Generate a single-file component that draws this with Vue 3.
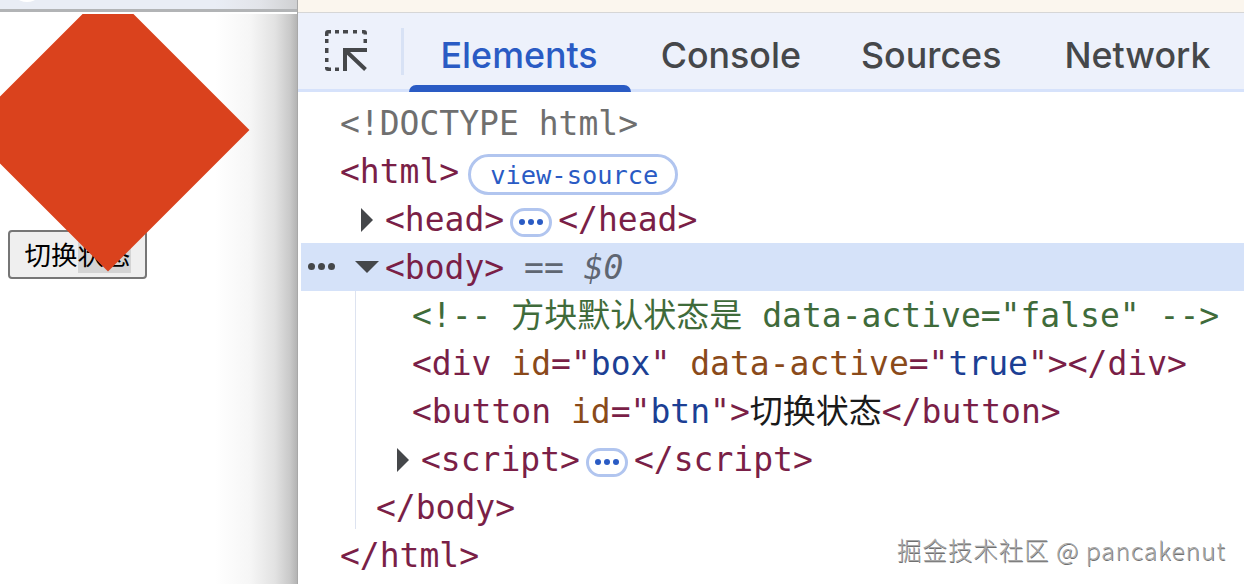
<script setup>
const rows = [
  { id: 'doctype', indent: 'root', parts: [['doc', '<!DOCTYPE html>']] },
  { id: 'html', indent: 'root', parts: [['tag', '<html>']], badge: 'view-source' },
  { id: 'head', indent: 'child', arrow: 'right', parts: [['tag', '<head>']], dots: true, tail: '</head>' },
  { id: 'body', indent: 'child', arrow: 'down', selected: true, parts: [['tag', '<body>'], ['eq', ' == '], ['var', '$0']] },
  { id: 'comment', indent: 'inner', parts: [['comment', '<!-- 方块默认状态是 data-active="false" -->']] },
  { id: 'div', indent: 'inner', parts: [['tag', '<div '], ['attr', 'id'], ['tag', '="'], ['val', 'box'], ['tag', '" '], ['attr', 'data-active'], ['tag', '="'], ['val', 'true'], ['tag', '"></div>']] },
  { id: 'button', indent: 'inner', parts: [['tag', '<button '], ['attr', 'id'], ['tag', '="'], ['val', 'btn'], ['tag', '">'], ['text', '切换状态'], ['tag', '</button>']] },
  { id: 'script', indent: 'fold', arrow: 'right', parts: [['tag', '<script>']], dots: true, tail: '</' + 'script>' },
  { id: 'bodyend', indent: 'close', parts: [['tag', '</body>']] },
  { id: 'htmlend', indent: 'root', parts: [['tag', '</html>']] },
]
const tabs = ['Elements', 'Console', 'Sources', 'Network']
</script>

<template>
  <div class="shot">
    <section class="page">
      <div class="browser-strip"><span class="blob"></span></div>
      <div class="canvas">
        <button class="demo-btn"><span>切换</span><span class="muted">状态</span></button>
        <div class="box"></div>
      </div>
    </section>
    <section class="devtools">
      <div class="cream"></div>
      <nav class="tabbar">
        <div class="inspect">
          <svg width="42" height="42" viewBox="0 0 42 42">
            <path d="M3 0h3v3.500H3.500V6H0V3a3 3 0 0 1 3-3zM10 0h4v3.500h-4zM18 0h5v3.500h-5zM28 0h4v3.500h-4zM37 0h2a3 3 0 0 1 3 3v1.500h-3.500v-1H37zM38.500 9H42v4h-3.500zM0 9h3.500v4H0zM0 18h3.500v5H0zM0 28h3.500v4H0zM0 37h3.500v.5H6V41H3a3 3 0 0 1-3-3zM10 37.500h4V41h-4z" fill="#45474a"/>
            <path d="M20 41V20h22M20.500 20.500 40.500 39.500" fill="none" stroke="#45474a" stroke-width="4"/>
          </svg>
        </div>
        <div class="sep"></div>
        <div v-for="(t, i) in tabs" :key="t" class="tab" :class="{ active: i === 0 }">{{ t }}</div>
      </nav>
      <div class="tree">
        <div class="guide"></div>
        <div v-for="r in rows" :key="r.id" class="row" :class="[r.indent, { selected: r.selected }]">
          <span v-if="r.selected" class="gutter"><i></i><i></i><i></i></span>
          <span v-if="r.arrow" class="arrow" :class="r.arrow"></span>
          <span v-for="(p, n) in r.parts" :key="n" :class="p[0]">{{ p[1] }}</span>
          <span v-if="r.badge" class="badge">{{ r.badge }}</span>
          <span v-if="r.dots" class="dots"><i></i><i></i><i></i></span>
          <span v-if="r.tail" class="tag">{{ r.tail }}</span>
        </div>
      </div>
      <div class="mark">掘金技术社区 @ pancakenut</div>
    </section>
  </div>
</template>

<style>
html, body { margin: 0; background: #fff; overflow: hidden; }
</style>

<style scoped>
.shot { width: 1244px; height: 584px; display: flex; overflow: hidden; background: #fff; }
.page { width: 297px; flex: none; display: flex; flex-direction: column; }
.browser-strip { position: relative; height: 14px; flex: none; overflow: hidden; background: linear-gradient(180deg, transparent 0 9px, #b2b4b6 9px 12px, #fff 12px), linear-gradient(90deg, #e9edf5 0, #e9edf5 215px, #e2e4e9 260px, #cfd0d2 297px); }
.blob { position: absolute; left: 18px; top: -6px; width: 18px; height: 8px; border-radius: 50%; background: #fff; }
.canvas { position: relative; flex: 1; overflow: hidden; background: linear-gradient(90deg, #fff 0, #fff 215px, #f6f6f6 250px, #e2e2e2 275px, #c9c9c9 290px, #b4b4b4 297px); }
.demo-btn { position: absolute; left: 8px; top: 216px; width: 139px; height: 49px; box-sizing: border-box; padding: 0 0 2px; border: 2px solid #767676; border-radius: 4px; background: #efefef; color: #000; font: 26.500px "Noto Sans CJK SC", sans-serif; }
.muted { background: #d4d4d4; }
.box { position: absolute; left: 8px; top: 16px; width: 200px; height: 200px; background: #da421d; transform: rotate(45deg); }
.devtools { position: relative; flex: 1; min-width: 0; border-left: 1px solid #a8a8a8; display: flex; flex-direction: column; }
.cream { height: 12px; flex: none; background: #fbf6ee; border-bottom: 1px solid #d6d6d6; }
.tabbar { height: 79px; flex: none; box-sizing: border-box; display: flex; align-items: flex-start; background: #edf1fb; border-bottom: 3px solid #d6e2fb; }
.inspect { width: 103px; flex: none; padding: 17px 0 0 27px; box-sizing: border-box; }
.sep { width: 3px; height: 47px; margin-top: 15px; flex: none; background: #d8e2f5; }
.tab { height: 79px; padding: 0 30px; color: #45474a; font: 500 35.800px/84px Inter, sans-serif; position: relative; white-space: nowrap; }
.tab:last-child { margin-left: 3px; }
.tab.active { color: #2a5bc4; margin-left: 5px; padding: 0 33px 0 31.500px; }
.tab.active::after { content: ""; position: absolute; left: 0; right: 0; bottom: 0; height: 7px; background: #2a5bc4; border-radius: 7px 7px 0 0; }
.tree { position: relative; padding-top: 8px; font: 33px/48px "DejaVu Sans Mono", "Noto Sans CJK SC", monospace; color: #7a1f47; white-space: pre; }
.guide { position: absolute; left: 57px; top: 199px; width: 1px; height: 238px; background: #dde3f0; }
.row { position: relative; height: 48px; }
.row.root { padding-left: 42px; }
.row.child { padding-left: 87px; }
.row.close { padding-left: 78px; }
.row.inner { padding-left: 114px; }
.row.fold { padding-left: 123px; }
.row.selected { height: 47px; margin: -1px 0 1px 3px; padding-top: 1px; padding-left: 84px; background: #d5e2f9; }
.doc { color: #6f6f6f; }
.tag { color: #7a1f47; }
.attr { color: #8a4a1a; }
.val { color: #1c3f94; }
.text { color: #1a1a1a; }
.eq { color: #5f6672; }
.var { color: #5f6672; font-style: italic; }
.comment { color: #3f6b3a; }
.arrow { position: absolute; width: 0; height: 0; }
.arrow.right { border-left: 12px solid #45474a; border-top: 12px solid transparent; border-bottom: 12px solid transparent; top: 12px; margin-left: -24px; }
.arrow.down { border-top: 12px solid #45474a; border-left: 12px solid transparent; border-right: 12px solid transparent; top: 18px; margin-left: -30px; }
.gutter { position: absolute; left: 7px; top: 20px; display: flex; gap: 3px; }
.gutter i { width: 7px; height: 7px; border-radius: 50%; background: #45474a; }
.badge { display: inline-block; height: 41px; margin-left: 9px; padding: 0 17px 0 19px; box-sizing: border-box; vertical-align: -1px; border: 3px solid #b1c5ef; border-radius: 21px; color: #2a5bc4; font-size: 25.400px; line-height: 36px; }
.dots { display: inline-flex; align-items: center; justify-content: center; gap: 3px; width: 42px; height: 29px; box-sizing: border-box; margin: 0 6px 0 6px; vertical-align: 6px; border: 3px solid #b1c5ef; border-radius: 15px; }
.dots i { width: 6px; height: 6px; border-radius: 50%; background: #2a5bc4; }
.mark { position: absolute; right: 18px; bottom: 19px; color: #a8a8a8; font: 300 24.500px/30px "Noto Sans CJK SC", sans-serif; letter-spacing: 0.950px; text-shadow: 0.6px 0.6px 0 #707070; white-space: nowrap; }
</style>
